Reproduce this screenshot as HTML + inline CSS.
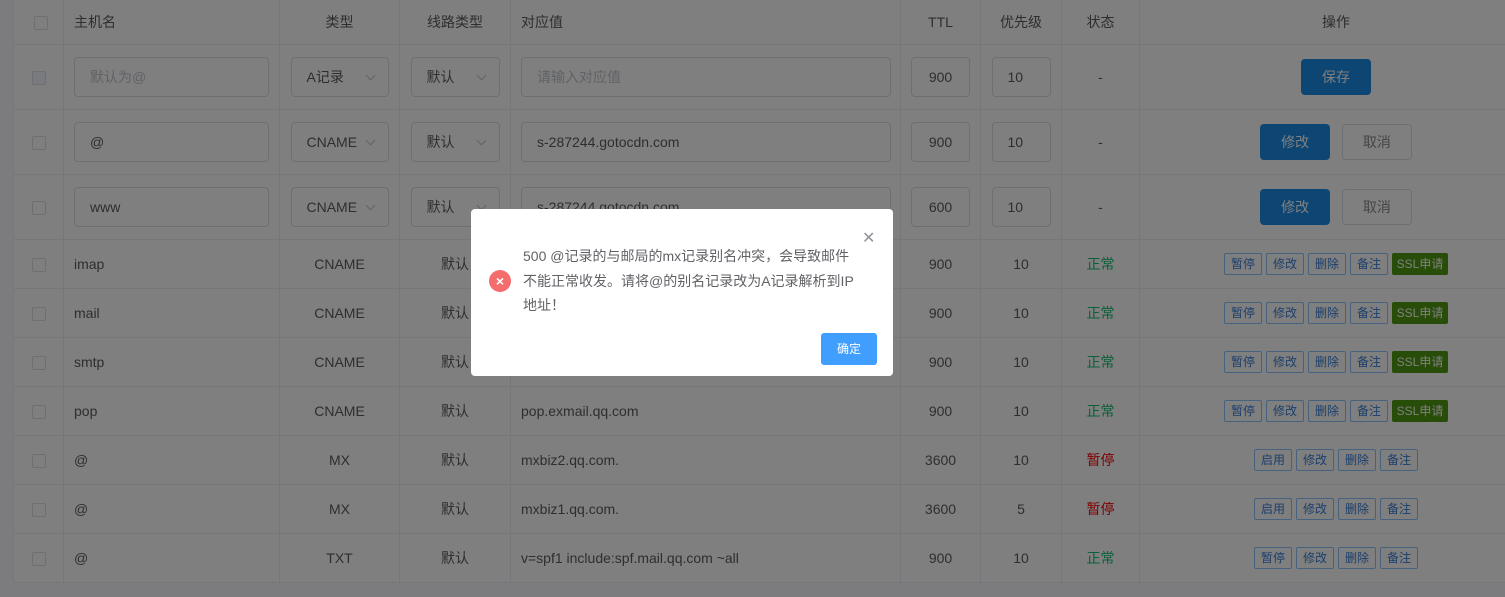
<!DOCTYPE html>
<html><head><meta charset="utf-8"><style>
*{box-sizing:border-box;margin:0;padding:0}
body{width:1505px;height:597px;overflow:hidden;background:#f8f8fc;font-family:"Liberation Sans","Noto Sans CJK SC",sans-serif;font-size:14px;color:#5a5c60;position:relative}
.wrap{position:absolute;left:13px;top:0;width:1520px;background:#fff}
table{border-collapse:collapse;table-layout:fixed;width:1519px}
td{border-bottom:1px solid #ebeef5;border-right:1px solid #ebeef5;height:49px;padding:0;vertical-align:middle;white-space:nowrap;overflow:hidden}
td:first-child{border-left:1px solid #ebeef5}
tr.h td{height:44px}
tr.i td{height:65px}
.c{text-align:center}.l{padding-left:10px}
.cb{display:inline-block;width:14px;height:14px;border:1px solid #dcdfe6;border-radius:2px;background:#fff;vertical-align:middle}
.inp{display:inline-block;height:40px;border:1px solid #dcdfe6;border-radius:4px;line-height:38px;padding-left:15px;vertical-align:middle;background:#fff;position:relative;text-align:left}
.sel::after{content:"";position:absolute;right:14px;top:14px;width:6px;height:6px;border-right:1px solid #c0c4cc;border-bottom:1px solid #c0c4cc;transform:rotate(45deg)}
.btn{display:inline-block;width:70px;height:36px;line-height:36px;border-radius:4px;text-align:center;vertical-align:middle}
.pri{background:#1a8ae6;color:#fff}
.def{border:1px solid #dcdfe6;color:#8a8c90;background:#fff;line-height:34px}
.ops{display:flex;justify-content:center;gap:4px}
.sb{height:22px;line-height:20px;width:38px;font-size:12px;text-align:center;border:1px solid #8cc5ff;color:#3a7ed6;background:#fff;border-radius:2px}
.ssl{width:56px;background:#4e9a10;color:#fff;border-color:#4e9a10}
.ok{color:#14c070}.st{color:#f00}
.mask{position:absolute;left:0;top:0;width:1505px;height:597px;background:rgba(0,0,0,.5)}
.dlg{position:absolute;left:471px;top:209px;width:422px;height:167px;background:#fff;border-radius:4px}
.msg{position:absolute;left:52px;top:35px;width:340px;line-height:24.5px;color:#606266;font-size:14px}
.ic{position:absolute;left:18px;top:61px;width:22px;height:22px;border-radius:50%;background:#f56c6c;color:#fff;text-align:center;line-height:22px;font-size:14px;font-weight:bold}
.x{position:absolute;left:391px;top:19px;color:#909399;font-size:16px}
.okb{position:absolute;left:350px;top:124px;width:56px;height:32px;line-height:32px;text-align:center;background:#409eff;color:#fff;border-radius:3px;font-size:12px}
</style></head><body>
<div class="wrap"><table>
<colgroup><col style="width:50px"><col style="width:216px"><col style="width:120px"><col style="width:111px"><col style="width:390px"><col style="width:80px"><col style="width:81px"><col style="width:78px"><col style="width:393px"></colgroup>
<tr class="h"><td class="c"><span class="cb" style="margin-left:4px"></span></td><td class="l">主机名</td><td class="c">类型</td><td class="c">线路类型</td><td class="l">对应值</td><td class="c">TTL</td><td class="c">优先级</td><td class="c">状态</td><td class="c">操作</td></tr>
<tr class="i"><td class="c"><span class="cb" style="background:#f2f6fc"></span></td><td class="l"><span class="inp" style="width:195px;color:#c0c4cc">默认为@</span></td><td class="c"><span class="inp sel" style="width:98px">A记录</span></td><td class="c"><span class="inp sel" style="width:89px">默认</span></td><td class="l"><span class="inp" style="width:370px;color:#c0c4cc">请输入对应值</span></td><td class="c"><span class="inp" style="width:59px;padding-left:0;text-align:center">900</span></td><td class="c"><span class="inp" style="width:59px">10</span></td><td class="c">-</td><td class="c"><span class="btn pri" style="width:70px">保存</span></td></tr>
<tr class="i"><td class="c"><span class="cb"></span></td><td class="l"><span class="inp" style="width:195px">@</span></td><td class="c"><span class="inp sel" style="width:98px">CNAME</span></td><td class="c"><span class="inp sel" style="width:89px">默认</span></td><td class="l"><span class="inp" style="width:370px">s-287244.gotocdn.com</span></td><td class="c"><span class="inp" style="width:59px;padding-left:0;text-align:center">900</span></td><td class="c"><span class="inp" style="width:59px">10</span></td><td class="c">-</td><td class="c"><span class="btn pri">修改</span> &nbsp;&nbsp;<span class="btn def">取消</span></td></tr>
<tr class="i"><td class="c"><span class="cb"></span></td><td class="l"><span class="inp" style="width:195px">www</span></td><td class="c"><span class="inp sel" style="width:98px">CNAME</span></td><td class="c"><span class="inp sel" style="width:89px">默认</span></td><td class="l"><span class="inp" style="width:370px">s-287244.gotocdn.com</span></td><td class="c"><span class="inp" style="width:59px;padding-left:0;text-align:center">600</span></td><td class="c"><span class="inp" style="width:59px">10</span></td><td class="c">-</td><td class="c"><span class="btn pri">修改</span> &nbsp;&nbsp;<span class="btn def">取消</span></td></tr>
<tr><td class="c"><span class="cb"></span></td><td class="l">imap</td><td class="c">CNAME</td><td class="c">默认</td><td class="l"></td><td class="c">900</td><td class="c">10</td><td class="c ok">正常</td><td><div class="ops"><span class="sb">暂停</span><span class="sb">修改</span><span class="sb">删除</span><span class="sb">备注</span><span class="sb ssl">SSL申请</span></div></td></tr>
<tr><td class="c"><span class="cb"></span></td><td class="l">mail</td><td class="c">CNAME</td><td class="c">默认</td><td class="l"></td><td class="c">900</td><td class="c">10</td><td class="c ok">正常</td><td><div class="ops"><span class="sb">暂停</span><span class="sb">修改</span><span class="sb">删除</span><span class="sb">备注</span><span class="sb ssl">SSL申请</span></div></td></tr>
<tr><td class="c"><span class="cb"></span></td><td class="l">smtp</td><td class="c">CNAME</td><td class="c">默认</td><td class="l"></td><td class="c">900</td><td class="c">10</td><td class="c ok">正常</td><td><div class="ops"><span class="sb">暂停</span><span class="sb">修改</span><span class="sb">删除</span><span class="sb">备注</span><span class="sb ssl">SSL申请</span></div></td></tr>
<tr><td class="c"><span class="cb"></span></td><td class="l">pop</td><td class="c">CNAME</td><td class="c">默认</td><td class="l">pop.exmail.qq.com</td><td class="c">900</td><td class="c">10</td><td class="c ok">正常</td><td><div class="ops"><span class="sb">暂停</span><span class="sb">修改</span><span class="sb">删除</span><span class="sb">备注</span><span class="sb ssl">SSL申请</span></div></td></tr>
<tr><td class="c"><span class="cb"></span></td><td class="l">@</td><td class="c">MX</td><td class="c">默认</td><td class="l">mxbiz2.qq.com.</td><td class="c">3600</td><td class="c">10</td><td class="c st">暂停</td><td><div class="ops"><span class="sb">启用</span><span class="sb">修改</span><span class="sb">删除</span><span class="sb">备注</span></div></td></tr>
<tr><td class="c"><span class="cb"></span></td><td class="l">@</td><td class="c">MX</td><td class="c">默认</td><td class="l">mxbiz1.qq.com.</td><td class="c">3600</td><td class="c">5</td><td class="c st">暂停</td><td><div class="ops"><span class="sb">启用</span><span class="sb">修改</span><span class="sb">删除</span><span class="sb">备注</span></div></td></tr>
<tr><td class="c"><span class="cb"></span></td><td class="l">@</td><td class="c">TXT</td><td class="c">默认</td><td class="l">v=spf1 include:spf.mail.qq.com ~all</td><td class="c">900</td><td class="c">10</td><td class="c ok">正常</td><td><div class="ops"><span class="sb">暂停</span><span class="sb">修改</span><span class="sb">删除</span><span class="sb">备注</span></div></td></tr>
</table></div>
<div class="mask"></div>
<div class="dlg">
<div class="x">✕</div>
<div class="ic">×</div>
<div class="msg">500 @记录的与邮局的mx记录别名冲突，会导致邮件不能正常收发。请将@的别名记录改为A记录解析到IP地址！</div>
<div class="okb">确定</div>
</div>
</body></html>
